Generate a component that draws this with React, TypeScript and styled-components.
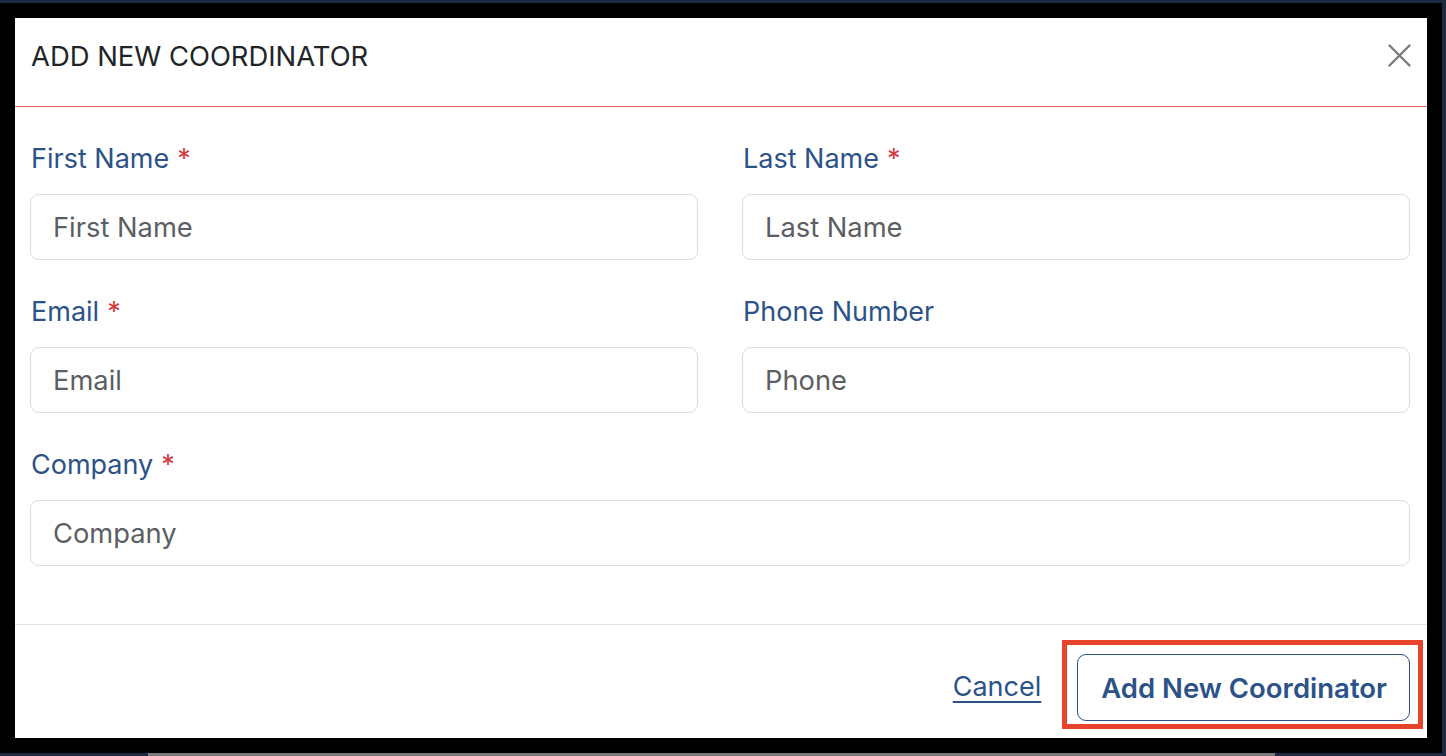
import React from "react";
import styled, { createGlobalStyle } from "styled-components";

const GlobalStyle = createGlobalStyle`
  html, body {
    margin: 0;
    padding: 0;
    background: #1d2a42;
    width: 1446px;
    height: 756px;
    overflow: hidden;
  }
  * { box-sizing: border-box; }
`;

const Page = styled.div`
  width: 1446px;
  height: 756px;
  padding-top: 3px;
  display: flex;
  flex-direction: column;
  font-family: Inter, "Liberation Sans", sans-serif;
`;

const Frame = styled.div`
  width: 1442px;
  height: 750px;
  background: #000;
  padding: 15px;
`;

const Modal = styled.div`
  width: 1412px;
  height: 720px;
  background: #fff;
  display: flex;
  flex-direction: column;
`;

const Header = styled.div`
  height: 89px;
  flex: none;
  display: flex;
  align-items: center;
  justify-content: space-between;
  padding: 0 15px 13px 16px;
  border-bottom: 1px solid #e35f52;
`;

const Title = styled.h2`
  margin: 0;
  font-size: 27.4px;
  font-weight: 400;
  color: #212529;
  letter-spacing: 0;
`;

const CloseButton = styled.button`
  width: 24px;
  height: 24px;
  padding: 0;
  border: none;
  background: none;
  display: flex;
  align-items: center;
  justify-content: center;
  margin-right: 1px;
`;

const Body = styled.div`
  flex: 1;
  padding: 31px 17px 0 15px;
  display: grid;
  grid-template-columns: 1fr 1fr;
  column-gap: 44px;
  row-gap: 31px;
  align-content: start;
`;

const Field = styled.div<{ $span?: boolean }>`
  display: flex;
  flex-direction: column;
  grid-column: ${(p) => (p.$span ? "1 / span 2" : "auto")};
`;

const Label = styled.label`
  font-size: 27px;
  line-height: 41px;
  color: #2c5288;
  margin-bottom: 15px;
  padding-left: 1px;
`;

const Required = styled.span`
  color: #d63a3f;
  margin-left: 8px;
`;

const Input = styled.input`
  height: 66px;
  width: 100%;
  border: 1px solid #dcdde3;
  border-radius: 9px;
  padding: 0 22px;
  font-family: Inter, "Liberation Sans", sans-serif;
  font-size: 27.3px;
  color: #212529;
  background: #fff;
  outline: none;
  &::placeholder {
    color: #5b5f64;
  }
`;

const Footer = styled.div`
  height: 114px;
  flex: none;
  border-top: 1px solid #dfe1e5;
  display: flex;
  justify-content: flex-end;
  align-items: flex-start;
  gap: 36px;
  padding: 29px 17px 0 0;
`;

const CancelLink = styled.a`
  font-size: 27px;
  color: #2c5288;
  text-decoration: underline;
  text-underline-offset: 5px;
  text-decoration-thickness: 1.5px;
  line-height: 66px;
  cursor: pointer;
`;

const PrimaryWrap = styled.div`
  position: relative;
`;

const PrimaryButton = styled.button`
  height: 67px;
  padding: 0 22px 0 23px;
  border: 1px solid #2c5288;
  border-radius: 9px;
  background: #fff;
  color: #2c5288;
  font-family: Inter, "Liberation Sans", sans-serif;
  font-size: 27.5px;
  font-weight: 600;
`;

const Highlight = styled.div`
  position: absolute;
  top: -14px;
  left: -15px;
  right: -13px;
  bottom: -8px;
  border: 5px solid #e8432b;
  pointer-events: none;
`;

const BottomStrip = styled.div`
  height: 3px;
  display: flex;
`;

const StripSegment = styled.div<{ $w: string; $c: string }>`
  flex: ${(p) => p.$w};
  background: ${(p) => p.$c};
`;

const fields = [
  { label: "First Name", placeholder: "First Name", required: true },
  { label: "Last Name", placeholder: "Last Name", required: true },
  { label: "Email", placeholder: "Email", required: true },
  { label: "Phone Number", placeholder: "Phone", required: false },
];

export default function App() {
  return (
    <>
      <GlobalStyle />
      <Page>
        <Frame>
          <Modal>
            <Header>
              <Title>ADD NEW COORDINATOR</Title>
              <CloseButton aria-label="Close">
                <svg width="23" height="23" viewBox="0 0 23 23">
                  <path
                    d="M1.5 1.5 L21.5 21.5 M21.5 1.5 L1.5 21.5"
                    stroke="#7a7a7a"
                    strokeWidth="2.4"
                    strokeLinecap="round"
                  />
                </svg>
              </CloseButton>
            </Header>
            <Body>
              {fields.map((f) => (
                <Field key={f.label}>
                  <Label>
                    {f.label}
                    {f.required && <Required>*</Required>}
                  </Label>
                  <Input placeholder={f.placeholder} />
                </Field>
              ))}
              <Field $span>
                <Label>
                  Company<Required>*</Required>
                </Label>
                <Input placeholder="Company" />
              </Field>
            </Body>
            <Footer>
              <CancelLink>Cancel</CancelLink>
              <PrimaryWrap>
                <PrimaryButton>Add New Coordinator</PrimaryButton>
                <Highlight />
              </PrimaryWrap>
            </Footer>
          </Modal>
        </Frame>
        <BottomStrip>
          <StripSegment $w="0 0 148px" $c="#1d2a42" />
          <StripSegment $w="0 0 1127px" $c="#7a7a7a" />
          <StripSegment $w="1" $c="#1d2a42" />
        </BottomStrip>
      </Page>
    </>
  );
}
